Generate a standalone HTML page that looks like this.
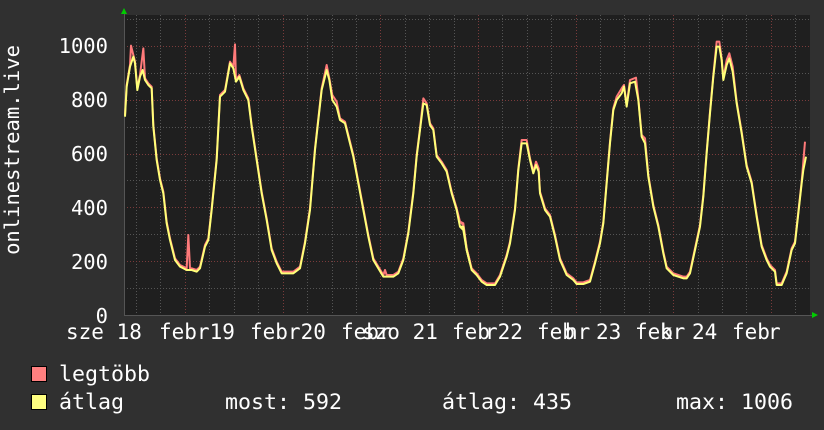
<!DOCTYPE html>
<html><head><meta charset="utf-8"><style>
html,body{margin:0;padding:0;background:#303030;}
svg{display:block}
text{font-family:"DejaVu Sans Mono","Liberation Mono",monospace;font-size:20.5px;fill:#fff}
.x{font-size:21px}
.l{font-size:21.6px}
</style></head><body>
<svg width="824" height="430" viewBox="0 0 824 430" xmlns="http://www.w3.org/2000/svg">
<rect width="824" height="430" fill="#303030"/>
<rect x="124" y="15" width="686" height="300" fill="#1f1f1f"/>
<g stroke="#555" stroke-width="1" stroke-dasharray="1,2">
<line x1="124" x2="810" y1="19.5" y2="19.5"/><line x1="124" x2="810" y1="73.5" y2="73.5"/><line x1="124" x2="810" y1="127.5" y2="127.5"/><line x1="124" x2="810" y1="180.5" y2="180.5"/><line x1="124" x2="810" y1="234.5" y2="234.5"/><line x1="124" x2="810" y1="288.5" y2="288.5"/>
<line y1="15" y2="315" x1="136.5" x2="136.5"/><line y1="15" y2="315" x1="160.5" x2="160.5"/><line y1="15" y2="315" x1="209.5" x2="209.5"/><line y1="15" y2="315" x1="234.5" x2="234.5"/><line y1="15" y2="315" x1="258.5" x2="258.5"/><line y1="15" y2="315" x1="307.5" x2="307.5"/><line y1="15" y2="315" x1="332.5" x2="332.5"/><line y1="15" y2="315" x1="356.5" x2="356.5"/><line y1="15" y2="315" x1="405.5" x2="405.5"/><line y1="15" y2="315" x1="429.5" x2="429.5"/><line y1="15" y2="315" x1="454.5" x2="454.5"/><line y1="15" y2="315" x1="502.5" x2="502.5"/><line y1="15" y2="315" x1="527.5" x2="527.5"/><line y1="15" y2="315" x1="551.5" x2="551.5"/><line y1="15" y2="315" x1="600.5" x2="600.5"/><line y1="15" y2="315" x1="624.5" x2="624.5"/><line y1="15" y2="315" x1="649.5" x2="649.5"/><line y1="15" y2="315" x1="698.5" x2="698.5"/><line y1="15" y2="315" x1="722.5" x2="722.5"/><line y1="15" y2="315" x1="746.5" x2="746.5"/><line y1="15" y2="315" x1="795.5" x2="795.5"/>
</g>
<g stroke="#7a3b3b" stroke-width="1" stroke-dasharray="1,2">
<line x1="124" x2="810" y1="46.5" y2="46.5"/><line x1="124" x2="810" y1="100.5" y2="100.5"/><line x1="124" x2="810" y1="154.5" y2="154.5"/><line x1="124" x2="810" y1="207.5" y2="207.5"/><line x1="124" x2="810" y1="261.5" y2="261.5"/>
<line y1="15" y2="315" x1="185.5" x2="185.5"/><line y1="15" y2="315" x1="283.5" x2="283.5"/><line y1="15" y2="315" x1="380.5" x2="380.5"/><line y1="15" y2="315" x1="478.5" x2="478.5"/><line y1="15" y2="315" x1="576.5" x2="576.5"/><line y1="15" y2="315" x1="673.5" x2="673.5"/><line y1="15" y2="315" x1="771.5" x2="771.5"/>
</g>
<line x1="124" x2="812" y1="315.5" y2="315.5" stroke="#555"/>
<line x1="124.5" x2="124.5" y1="12" y2="315" stroke="#555"/>
<polygon points="121,14 127,14 124,8" fill="#0c0"/>
<polygon points="812,312 812,318 818,315" fill="#0c0"/>
<g transform="translate(120,10) scale(0.33333)" fill="none" stroke-linejoin="round">
<g transform="translate(0,-5)" stroke="#ff7a7a" stroke-width="6">
<polyline points="15,320 20,230 30,170 33,112 40,140 45,160 52,240 60,200 70,120 75,210 85,225 95,235 100,350 110,450 120,510 130,550 140,640 150,690 165,750 180,770 200,780 205,680 210,780 215,780 230,785 240,775 255,710 265,690 275,600 290,450 300,260 315,245 330,160 340,175 345,108 348,215 358,200 370,240 385,270 395,350 410,450 425,550 440,630 455,720 470,760 485,790 500,790 520,790 540,775 555,700 570,600 585,420 595,330 605,240 620,170 628,210 637,260 650,280 660,330 675,340 690,400 700,440 715,520 730,600 745,680 760,750 775,775 790,800 795,785 800,800 820,800 835,790 850,750 865,670 880,550 890,440 900,360 910,270 920,285 930,345 940,360 950,440 965,460 980,485 995,550 1010,600 1020,640 1030,650 1040,720 1050,760"/>
</g>
<g transform="translate(1020,-5)" stroke="#ff7a7a" stroke-width="6">
<polyline points="0,640 10,645 20,720 35,780 50,795 65,815 80,825 105,825 120,800 140,740 150,700 165,600 175,480 185,395 200,395 210,450 220,490 228,460 236,480 240,550 255,600 270,620 285,680 300,750 320,795 340,810 350,822 370,822 390,815 405,760 420,700 430,640 440,520 450,400 460,300 470,265 485,240 492,230 500,290 510,215 528,208 535,270 545,380 555,390 565,500 580,590 595,650 610,730 620,775 640,795 655,800 670,805 680,805 690,790 705,720 720,650 730,560 740,430 750,310 760,200 770,100 778,100 785,150 790,210 800,155 808,135 818,175 830,280 845,370 860,470 875,520 890,620 905,710 920,750 930,770 945,785 950,825 965,825 980,790 995,720 1005,700 1015,610 1025,520 1030,460 1035,400"/>
</g>
<polyline stroke="#ffff78" stroke-width="6" points="15,320 20,230 30,170 40,140 45,160 52,240 60,200 68,180 75,210 85,225 95,235 100,350 110,450 120,510 130,550 140,640 150,690 165,750 180,770 200,780 215,780 230,785 240,775 255,710 265,690 275,600 290,450 300,260 315,245 330,160 340,175 348,215 358,200 370,240 385,270 395,350 410,450 425,550 440,630 455,720 470,760 485,790 500,790 520,790 540,775 555,700 570,600 585,420 595,330 605,240 620,180 628,210 637,270 650,290 660,330 675,340 690,400 700,440 715,520 730,600 745,680 760,750 775,775 790,800 805,800 820,800 835,790 850,750 865,670 880,550 890,440 900,360 910,280 920,285 930,345 940,360 950,440 965,460 980,485 995,550 1010,600 1020,650 1030,660 1040,720 1050,760"/>
<g transform="translate(1020,0)">
<polyline stroke="#ffff78" stroke-width="6" points="0,650 10,650 20,720 35,780 50,795 65,815 80,825 105,825 120,800 140,740 150,700 165,600 175,480 185,400 200,400 210,450 220,490 228,465 236,485 240,550 255,600 270,620 285,680 300,750 320,795 340,810 350,822 370,822 390,815 405,760 420,700 430,640 440,520 450,400 460,300 470,270 485,250 492,230 500,290 510,220 525,215 535,270 545,380 555,400 565,500 580,590 595,650 610,730 620,775 640,795 655,800 670,805 680,805 690,790 705,720 720,650 730,560 740,430 750,310 760,200 770,110 778,110 785,150 790,210 800,165 808,145 818,185 830,280 845,370 860,470 875,520 890,620 905,710 920,750 930,770 945,785 950,825 965,825 980,790 995,720 1005,700 1015,610 1025,520 1030,480 1038,440"/>
</g>
</g>
<g text-anchor="end">
<text x="108" y="53">1000</text>
<text x="108" y="107">800</text>
<text x="108" y="161">600</text>
<text x="108" y="215">400</text>
<text x="108" y="269">200</text>
<text x="108" y="323">0</text>
</g>
<text transform="translate(19,150) rotate(-90)" text-anchor="middle">onlinestream.live</text>
<g class="x">
<text class="x" x="66" y="339">sze 18</text>
<text class="x" x="159" y="339">febr19</text>
<text class="x" x="250" y="339">febr20</text>
<text class="x" x="341" y="339">febr</text><text class="x" x="362" y="339">szo 21</text>
<text class="x" x="452" y="339">feb</text><text class="x" x="485" y="339">r22</text>
<text class="x" x="537" y="339">feb</text><text class="x" x="565" y="339">hr</text><text class="x" x="596" y="339">23</text>
<text class="x" x="635" y="339">feb</text><text class="x" x="660" y="339">kr</text><text class="x" x="692" y="339">24</text>
<text class="x" x="732" y="339">feb</text><text class="x" x="768" y="339">r</text>
</g>
<rect x="31.5" y="366.5" width="15" height="15" fill="#ff8080" stroke="#000"/>
<rect x="31.5" y="394.5" width="15" height="15" fill="#ffff80" stroke="#000"/>
<text class="l" x="59" y="381">legtöbb</text>
<text class="l" x="59" y="409">átlag</text>
<text class="l" x="225" y="409">most: 592</text>
<text class="l" x="442" y="409">átlag: 435</text>
<text class="l" x="676" y="409">max: 1006</text>
</svg>
</body></html>
